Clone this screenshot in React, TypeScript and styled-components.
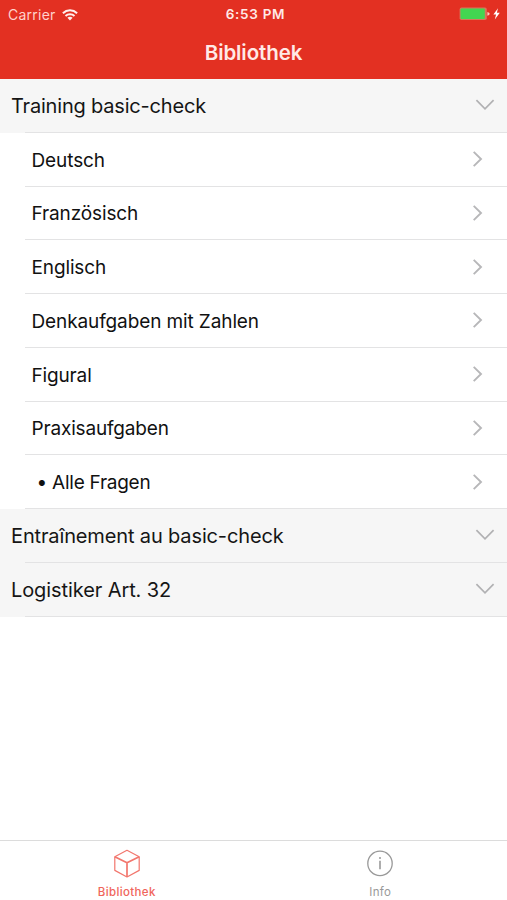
import React from "react";
import styled, { createGlobalStyle } from "styled-components";

const GlobalStyle = createGlobalStyle`
  * { box-sizing: border-box; }
  body { margin: 0; background: #fff; }
`;

const Screen = styled.div`
  width: 507px;
  height: 900px;
  display: flex;
  flex-direction: column;
  overflow: hidden;
  background: #fff;
  color: #111;
  font-family: Inter, "Liberation Sans", sans-serif;
`;

const Header = styled.header`
  flex: none;
  height: 79px;
  background: #e33022;
  color: #ffe9e6;
`;

const StatusBar = styled.div`
  height: 27px;
  padding: 0 6px 0 8px;
  display: grid;
  grid-template-columns: 1fr auto 1fr;
  align-items: center;
  line-height: 27px;
`;

const Carrier = styled.div`
  display: flex;
  align-items: center;
  gap: 6px;
  padding-top: 1px;
  font-size: 14px;
  letter-spacing: 0.25px;
  color: #ffd2cc;
`;

const Clock = styled.div`
  padding-top: 1px;
  padding-left: 2px;
  font-size: 13.5px;
  font-weight: 600;
  letter-spacing: 0.7px;
`;

const Power = styled.div`
  display: flex;
  justify-content: flex-end;
`;

const Title = styled.h1`
  margin: 0;
  height: 51px;
  line-height: 51px;
  text-align: center;
  font-size: 20.5px;
  font-weight: 600;
  letter-spacing: -0.1px;
`;

const List = styled.main`
  flex: 1;
`;

const Row = styled.div<{ $section?: boolean }>`
  height: 53.75px;
  display: flex;
  flex-direction: column;
  background: ${(p) => (p.$section ? "#f6f6f6" : "#fff")};
  color: ${(p) => (p.$section ? "#151515" : "#111")};
`;

const RowBody = styled.div<{ $section?: boolean }>`
  flex: 1;
  display: flex;
  align-items: center;
  justify-content: space-between;
  padding: ${(p) => (p.$section ? "0 12px 0 11px" : "0 23px 0 31.5px")};
`;

const Label = styled.span<{ $size: number; $spacing: number }>`
  padding-top: 2px;
  font-size: ${(p) => p.$size}px;
  letter-spacing: ${(p) => p.$spacing}px;
  white-space: pre;
`;

const Divider = styled.div`
  flex: none;
  height: 1px;
  margin-left: 25px;
  background: #e3e3e4;
`;

const TabBar = styled.nav`
  flex: none;
  height: 60px;
  display: flex;
  border-top: 1px solid #dcdcdc;
  padding-top: 8px;
`;

const Tab = styled.div<{ $active?: boolean }>`
  flex: 1;
  display: flex;
  flex-direction: column;
  align-items: center;
  color: ${(p) => (p.$active ? "#f0655b" : "#999")};
`;

const TabLabel = styled.span<{ $spacing: number; $weight: number }>`
  margin-top: 6px;
  font-size: 11.5px;
  line-height: 16px;
  font-weight: ${(p) => p.$weight};
  letter-spacing: ${(p) => p.$spacing}px;
`;

const Wifi = () => (
  <svg width="16" height="12" viewBox="0 0 16 12" fill="none" stroke="#fff0ee" strokeWidth="2">
    <path d="M.9 4.2C4.9.4 11.1.4 15.1 4.2" />
    <path d="M3.5 6.9C6 4.6 10 4.6 12.5 6.9" />
    <path d="M8 11.6 5.4 8.8Q8 6.7 10.6 8.8Z" fill="#fff0ee" stroke="none" />
  </svg>
);

const Battery = () => (
  <svg width="42" height="14" viewBox="0 0 42 14">
    <rect x=".6" y=".6" width="27.2" height="12.4" rx="1.8" fill="#d9745c" />
    <rect x="1.5" y="1.5" width="24.3" height="10.6" rx="1" fill="#43d551" />
    <path d="M28.4 4.9q2.3 .4 2.3 1.9t-2.3 1.9z" fill="#ffc7bf" />
    <path d="M39 1.2 34.4 7.4h2.7l-1.3 5.1 5-6.7h-2.9z" fill="#fff" />
  </svg>
);

const ChevronRight = () => (
  <svg width="12" height="18" viewBox="0 0 12 18" fill="none" stroke="#b7b7b9" strokeWidth="1.9">
    <path d="M1.7 1.9 9 9 1.7 16.1" />
  </svg>
);

const ChevronDown = () => (
  <svg width="20" height="14" viewBox="0 0 20 14" fill="none" stroke="#b1b1b3" strokeWidth="1.7">
    <path d="M1.4 2.1 10 10.8 18.6 2.1" />
  </svg>
);

const Cube = () => (
  <svg width="28" height="29" viewBox="0 0 28 29" fill="none" stroke="#f2766d" strokeLinejoin="round">
    <path d="M14 1.3 26.2 7.7V21.4L14 28 1.8 21.4V7.7Z" strokeWidth="1.2" />
    <path d="M1.8 7.7 14 13.8 26.2 7.7M14 13.8V28" strokeWidth="1.7" />
  </svg>
);

const InfoIcon = () => (
  <svg width="28" height="29" viewBox="0 0 28 29" fill="none" stroke="#999">
    <circle cx="14" cy="14.4" r="12.2" strokeWidth="1.3" />
    <path d="M14 11.8V20.2" strokeWidth="1.6" />
    <circle cx="14" cy="9" r="1" fill="#999" stroke="none" />
  </svg>
);

type Entry = { text: string; spacing: number; section?: boolean };

const entries: Entry[] = [
  { text: "Training basic-check", spacing: -0.19, section: true },
  { text: "Deutsch", spacing: -0.1 },
  { text: "Französisch", spacing: -0.13 },
  { text: "Englisch", spacing: -0.13 },
  { text: "Denkaufgaben mit Zahlen", spacing: -0.11 },
  { text: "Figural", spacing: -0.15 },
  { text: "Praxisaufgaben", spacing: -0.17 },
  { text: " • Alle Fragen", spacing: -0.26 },
  { text: "Entraînement au basic-check", spacing: -0.14, section: true },
  { text: "Logistiker Art. 32", spacing: -0.09, section: true },
];

export default function App() {
  return (
    <Screen>
      <GlobalStyle />
      <Header>
        <StatusBar>
          <Carrier>
            Carrier
            <Wifi />
          </Carrier>
          <Clock>6:53 PM</Clock>
          <Power>
            <Battery />
          </Power>
        </StatusBar>
        <Title>Bibliothek</Title>
      </Header>
      <List>
        {entries.map((e) => (
          <Row key={e.text} $section={e.section}>
            <RowBody $section={e.section}>
              <Label $size={e.section ? 20 : 19} $spacing={e.spacing}>
                {e.text}
              </Label>
              {e.section ? <ChevronDown /> : <ChevronRight />}
            </RowBody>
            <Divider />
          </Row>
        ))}
      </List>
      <TabBar>
        <Tab $active>
          <Cube />
          <TabLabel $spacing={0.35} $weight={500}>Bibliothek</TabLabel>
        </Tab>
        <Tab>
          <InfoIcon />
          <TabLabel $spacing={0.3} $weight={400}>Info</TabLabel>
        </Tab>
      </TabBar>
    </Screen>
  );
}
